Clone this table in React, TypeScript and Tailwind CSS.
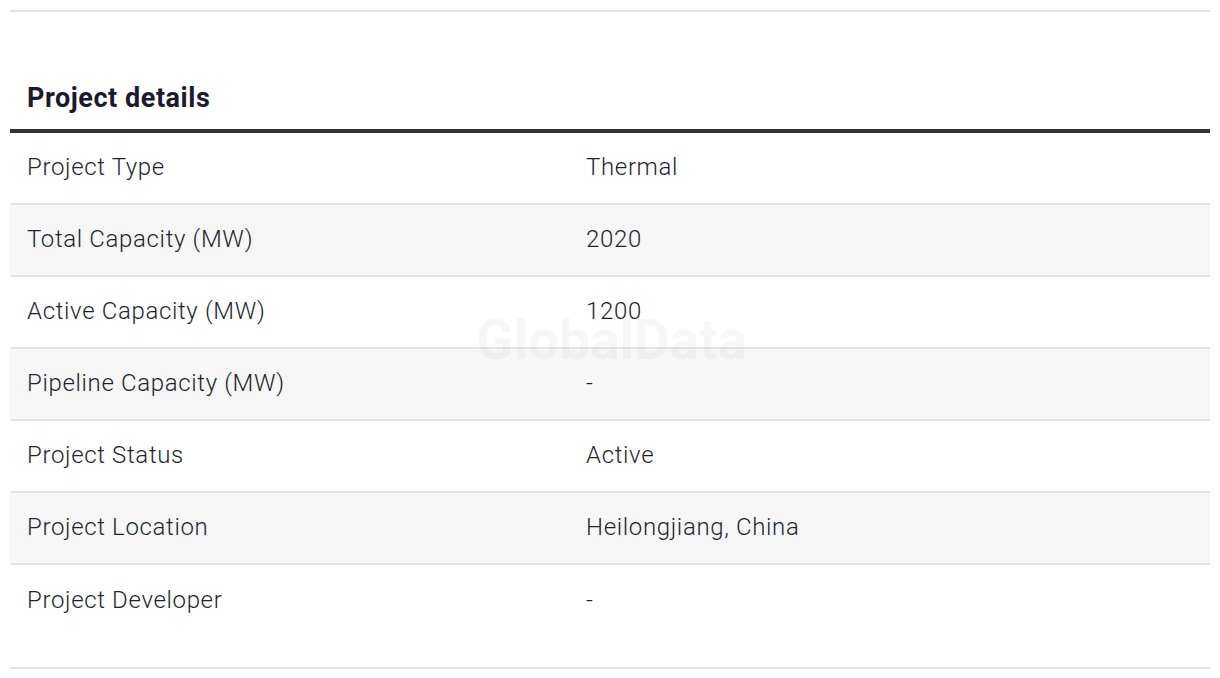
import React from "react";

const rows: [string, string][] = [
  ["Project Type", "Thermal"],
  ["Total Capacity (MW)", "2020"],
  ["Active Capacity (MW)", "1200"],
  ["Pipeline Capacity (MW)", "-"],
  ["Project Status", "Active"],
  ["Project Location", "Heilongjiang, China"],
  ["Project Developer", "-"],
];

export default function App() {
  return (
    <div
      className="w-[1220px] h-[678px] bg-white px-[10px] pt-[10px] relative overflow-hidden"
      style={{ fontFamily: "Roboto, 'Liberation Sans', sans-serif" }}
    >
      <div className="h-[2px] bg-[#e2e2e2]" />
      <h2 className="mt-[70px] pl-[17px] text-[27px] leading-[32px] font-bold tracking-[0.55px] text-[#1a1a2e] pb-[15px]">
        Project details
      </h2>
      <div className="h-[4px] bg-[#333333]" />
      <div className="relative">
        {rows.map(([k, v], i) => (
          <div
            key={k}
            className={`grid grid-cols-[559px_1fr] items-center h-[72px] text-[24px] leading-[30px] font-light tracking-[0.65px] text-[#1f1f33] ${
              i % 2 === 1 ? "bg-[#f7f7f7]" : "bg-white"
            } ${i < rows.length - 1 ? "border-b-2 border-[#e6e6e6]" : ""}`}
          >
            <div className="pl-[17px] -mt-[2px]">{k}</div>
            <div className="pl-[17px] -mt-[2px]">{v}</div>
          </div>
        ))}
        <div className="absolute left-[466px] top-[180px] text-[55px] leading-none font-bold text-[#000000]/[0.03] pointer-events-none select-none">
          GlobalData
        </div>
      </div>
      <div className="mt-[30px] h-[2px] bg-[#e2e2e2]" />
    </div>
  );
}
